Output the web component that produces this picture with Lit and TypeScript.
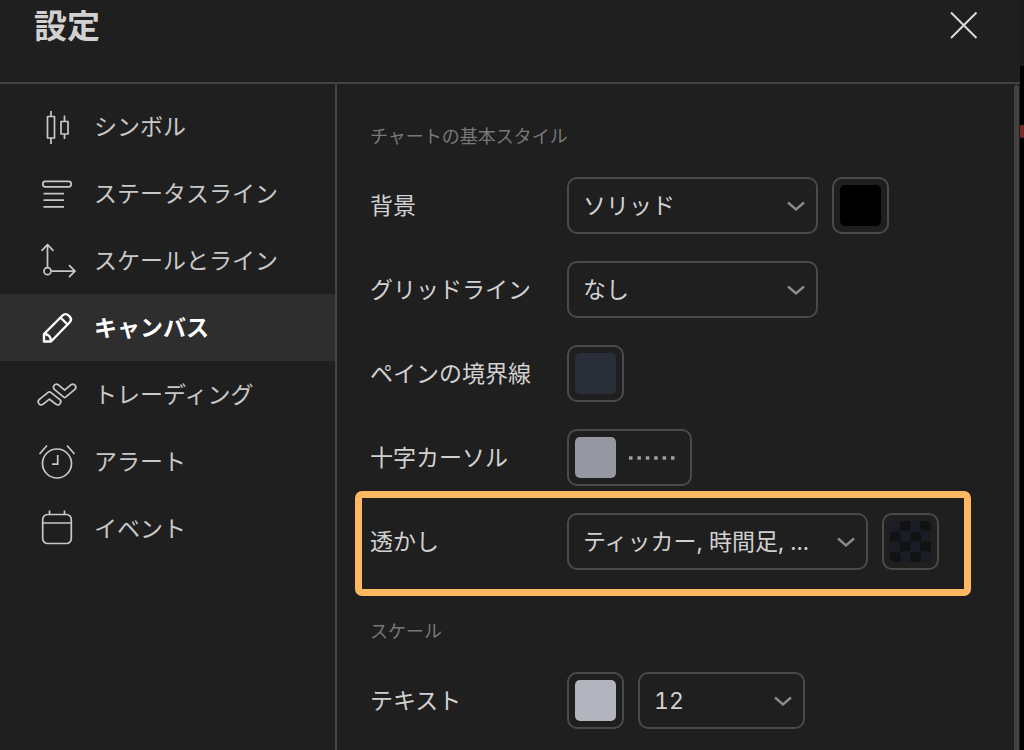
import { LitElement, html, css, svg, nothing } from "lit";
import { customElement, property, state } from "lit/decorators.js";
import { classMap } from "lit/directives/class-map.js";

const icons: Record<string, unknown> = {
  symbol: svg`<path d="M18 8v5.500M18 35v6M31.500 12.500V18M31.500 31v5"/><path d="M14.500 13.500h7V35h-7zM28 18.500h7V31h-7z"/>`,
  status: svg`<rect x="9.800" y="11.300" width="28.400" height="5.500" rx="2.500"/><path d="M10.500 23.600h20.500M10.500 30.200h20.500M10.500 36.800h20.500"/>`,
  scale: svg`<circle cx="14.500" cy="34.200" r="3.500"/><path d="M14.500 30.500V8M8.500 13.800l6-6.200 6 6.200M18 34.200h23M36 28.200l6 6-6 6"/>`,
  canvas: svg`<path d="M11 37.500v-7.500L29.500 11.500c1.800-1.800 4.300-1.800 6.100 0l.9.900c1.800 1.800 1.800 4.300 0 6.100L18 37.500zM11 30c4.500 0 7 3 7 7.500M27.500 13.500l7 7" />`,
  trading: svg`<path d="M6.100 28.700 15.400 21.200q1-.8 2 0l9.500 7.500a3 3 0 0 1-3.800 4.600L16.400 28.200 9.900 33.300a3 3 0 0 1-3.800-4.600z"/><path d="M21.400 18.300 31 26.400q.7.500 1.300 0l9.600-8.100a3 3 0 0 0-3.800-4.600L31.600 19.100 25.200 13.700a3 3 0 0 0-3.800 4.600z"/>`,
  alert: svg`<circle cx="24" cy="25.500" r="14.500"/><path d="M24.700 17v9.200H19M6.500 16l7.500-8.500M41.500 16 34 7.500"/>`,
  event: svg`<rect x="9.700" y="9.500" width="28.600" height="29" rx="5"/><path d="M10 18h28M16.500 5.500v4M31.500 5.500v4"/>`,
};

const sections = [
  { id: "symbol", label: "シンボル" },
  { id: "status", label: "ステータスライン" },
  { id: "scale", label: "スケールとライン" },
  { id: "canvas", label: "キャンバス" },
  { id: "trading", label: "トレーディング" },
  { id: "alert", label: "アラート" },
  { id: "event", label: "イベント" },
];

@customElement("select-box")
class SelectBox extends LitElement {
  @property() label = "";
  @property({ type: Array }) options: string[] = [];

  static styles = css`
    :host { display: block; position: relative; }
    .field {
      display: block;
      width: 100%;
      height: 57px;
      box-sizing: border-box;
      margin: 0;
      padding: 0 44px 0 14px;
      border: 2px solid #4a4a4a;
      border-radius: 10px;
      background: transparent;
      color: #d1d1d1;
      font: inherit;
      font-variant-numeric: tabular-nums;
      appearance: none;
      text-overflow: ellipsis;
    }
    .field option { background: #1f1f1f; }
    .arrow {
      position: absolute;
      top: 0;
      bottom: 0;
      right: 12px;
      margin: auto 0;
      width: 20px;
      height: 12px;
      fill: none;
      stroke: #8c8c8c;
      stroke-width: 2.4;
      pointer-events: none;
    }
  `;

  render() {
    return html`
      <select class="field" aria-label=${this.label}>
        ${this.options.map((o) => html`<option>${o}</option>`)}
      </select>
      <svg class="arrow" viewBox="0 0 20 12" aria-hidden="true"><path d="M2 2.500 10 9.500 18 2.500" /></svg>
    `;
  }
}

@customElement("color-button")
class ColorButton extends LitElement {
  @property() label = "";
  @property() tone = "black";
  @property({ type: Boolean }) line = false;

  static styles = css`
    :host { display: block; }
    .button {
      display: flex;
      align-items: center;
      gap: 12px;
      height: 57px;
      box-sizing: border-box;
      margin: 0;
      padding: 0 6px;
      border: 2px solid #4a4a4a;
      border-radius: 10px;
      background: transparent;
      cursor: pointer;
    }
    .with-line { padding-right: 14px; }
    .swatch { width: 41px; height: 41px; border-radius: 5px; }
    .black { background: #000; }
    .navy { background: #2a2e39; }
    .gray { background: #9598a1; }
    .silver { background: #b2b5be; }
    .checker {
      background: repeating-conic-gradient(#111213 0 25%, #1b1d26 0 50%) 0 0 / 50% 50%;
    }
    .dots { width: 48px; height: 4px; fill: #a0a2aa; }
  `;

  render() {
    return html`
      <button class=${classMap({ button: true, "with-line": this.line })} type="button" aria-label=${this.label}>
        <span class="swatch ${this.tone}"></span>
        ${this.line
          ? html`<svg class="dots" viewBox="0 0 48 4" aria-hidden="true">
              ${[0, 1, 2, 3, 4, 5].map((i) => svg`<rect x=${1 + i * 8.4} y="0.300" width="3.500" height="3.400" />`)}
            </svg>`
          : nothing}
      </button>
    `;
  }
}

@customElement("app-root")
class AppRoot extends LitElement {
  @state() private active = "canvas";

  static styles = css`
    :host {
      display: flex;
      height: 100vh;
      overflow: hidden;
      background: #000;
      color: #d1d1d1;
      font-family: Inter, "Noto Sans CJK JP", sans-serif;
      font-size: 23px;
      line-height: 34px;
    }
    .dialog {
      flex: 1;
      min-width: 0;
      display: flex;
      flex-direction: column;
      background: #1f1f1f;
    }
    .header {
      flex: none;
      display: flex;
      justify-content: space-between;
      align-items: flex-start;
      height: 84px;
      box-sizing: border-box;
      padding: 0 34px;
      border-bottom: 2px solid #434343;
    }
    .title { margin: 0; font-size: 33px; line-height: 52px; font-weight: 700; }
    .close {
      width: 46px;
      height: 50px;
      margin: 0;
      padding: 0;
      border: 0;
      background: none;
      color: #dbdbdb;
      cursor: pointer;
    }
    .close-icon { display: block; width: 46px; height: 50px; fill: none; stroke: currentColor; stroke-width: 2; }
    .body { flex: 1; min-height: 0; display: flex; }
    .nav {
      flex: none;
      width: 335px;
      padding-top: 9px;
      border-right: 2px solid #434343;
    }
    .tab {
      display: flex;
      align-items: center;
      gap: 13px;
      width: 100%;
      height: 67px;
      margin: 0;
      padding: 0 33px;
      border: 0;
      background: none;
      color: #c8c8c8;
      font: inherit;
      text-align: left;
      cursor: pointer;
    }
    .selected { background: #2e2e2e; color: #fff; font-weight: 700; }
    .tab-icon { flex: none; width: 48px; height: 48px; fill: none; stroke: currentColor; stroke-width: 1.7; }
    .selected .tab-icon { stroke-width: 2.4; }
    .content {
      flex: 1;
      min-width: 0;
      display: flex;
      flex-direction: column;
      gap: 49px;
      padding: 40px 0 0 33px;
      overflow: hidden;
    }
    .group { display: flex; flex-direction: column; align-items: flex-start; gap: 27px; }
    .group-title { margin: 0; color: #787878; font-size: 18px; line-height: 26px; font-weight: 400; }
    .row { display: flex; align-items: center; gap: 14px; position: relative; }
    .row-label { width: 183px; white-space: nowrap; }
    .marked::after {
      content: "";
      position: absolute;
      inset: -22px -32px -26px -15px;
      border: 7px solid #ffb762;
      border-radius: 7px;
      pointer-events: none;
    }
    .narrow { width: 167px; }
    .medium { width: 251px; }
    .wide { width: 301px; }
    .scrollbar { flex: none; width: 5px; margin: 1px 1px 0 0; border-radius: 3px 3px 0 0; background: #424242; }
    .backdrop { flex: none; width: 4px; display: flex; flex-direction: column; }
    .toolbar { height: 66px; background: #1c1c1c; }
    .chart { flex: 1; padding-top: 59px; }
    .price { height: 12px; background: #7a2424; border-bottom: 1px solid #333; }
  `;

  render() {
    return html`
      <div class="dialog" role="dialog" aria-labelledby="title">
        <header class="header">
          <h1 class="title" id="title">設定</h1>
          <button class="close" type="button" aria-label="閉じる">
            <svg class="close-icon" viewBox="0 0 46 50" aria-hidden="true"><path d="M11 12.500 36.500 38M36.500 12.500 11 38" /></svg>
          </button>
        </header>
        <div class="body">
          <nav class="nav">
            ${sections.map(
              (s) => html`
                <button
                  type="button"
                  class=${classMap({ tab: true, selected: s.id === this.active })}
                  @click=${() => (this.active = s.id)}
                >
                  <svg class="tab-icon" viewBox="0 0 48 48" stroke-linejoin="round" aria-hidden="true">${icons[s.id]}</svg>
                  <span>${s.label}</span>
                </button>
              `
            )}
          </nav>
          <main class="content">
            <section class="group">
              <h2 class="group-title">チャートの基本スタイル</h2>
              <div class="row">
                <span class="row-label">背景</span>
                <select-box class="medium" label="背景" .options=${["ソリッド", "グラデーション"]}></select-box>
                <color-button label="背景の色" tone="black"></color-button>
              </div>
              <div class="row">
                <span class="row-label">グリッドライン</span>
                <select-box class="medium" label="グリッドライン" .options=${["なし"]}></select-box>
              </div>
              <div class="row">
                <span class="row-label">ペインの境界線</span>
                <color-button label="ペインの境界線の色" tone="navy"></color-button>
              </div>
              <div class="row">
                <span class="row-label">十字カーソル</span>
                <color-button label="十字カーソルの色" tone="gray" line></color-button>
              </div>
              <div class="row marked">
                <span class="row-label">透かし</span>
                <select-box class="wide" label="透かし" .options=${["ティッカー, 時間足, ..."]}></select-box>
                <color-button label="透かしの色" tone="checker"></color-button>
              </div>
            </section>
            <section class="group">
              <h2 class="group-title">スケール</h2>
              <div class="row">
                <span class="row-label">テキスト</span>
                <color-button label="テキストの色" tone="silver"></color-button>
                <select-box class="narrow" label="文字サイズ" .options=${["12", "14", "16"]}></select-box>
              </div>
            </section>
          </main>
          <div class="scrollbar"></div>
        </div>
      </div>
      <div class="backdrop">
        <div class="toolbar"></div>
        <div class="chart"><div class="price"></div></div>
      </div>
    `;
  }
}
